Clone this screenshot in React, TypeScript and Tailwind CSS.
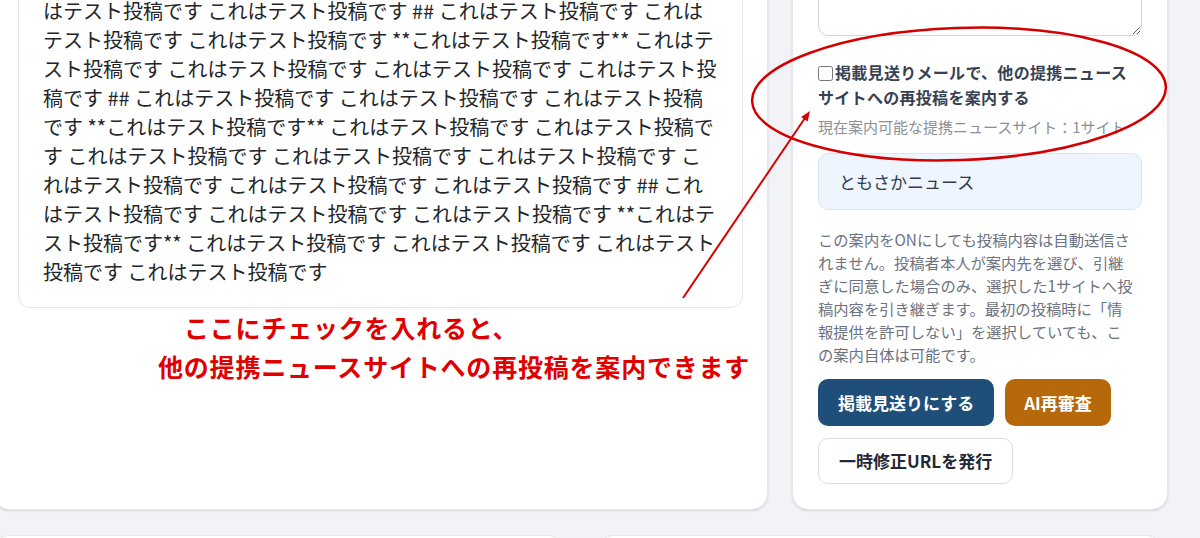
import React from 'react';

const POST_LINES = [
  'これはテスト投稿です これはテスト投稿です これはテスト投稿です これは',
  'テスト投稿です **これはテスト投稿です** これはテスト投稿です これ',
  'はテスト投稿です これはテスト投稿です これはテスト投稿です これ',
  'はテスト投稿です これはテスト投稿です ## これはテスト投稿です これは',
  'テスト投稿です これはテスト投稿です **これはテスト投稿です** これはテ',
  'スト投稿です これはテスト投稿です これはテスト投稿です これはテスト投',
  '稿です ## これはテスト投稿です これはテスト投稿です これはテスト投稿',
  'です **これはテスト投稿です** これはテスト投稿です これはテスト投稿で',
  'す これはテスト投稿です これはテスト投稿です これはテスト投稿です こ',
  'れはテスト投稿です これはテスト投稿です これはテスト投稿です ## これ',
  'はテスト投稿です これはテスト投稿です これはテスト投稿です **これはテ',
  'スト投稿です** これはテスト投稿です これはテスト投稿です これはテスト',
  '投稿です これはテスト投稿です',
];

const NOTE_LINES = [
  'この案内をONにしても投稿内容は自動送信さ',
  'れません。投稿者本人が案内先を選び、引継',
  'ぎに同意した場合のみ、選択した1サイトへ投',
  '稿内容を引き継ぎます。最初の投稿時に「情',
  '報提供を許可しない」を選択していても、こ',
  'の案内自体は可能です。',
];

function Annotation() {
  // 赤い手書き風の囲みと矢印
  return (
    <svg
      className="pointer-events-none absolute left-0 top-0"
      width="1200"
      height="538"
      viewBox="0 0 1200 538"
    >
      <ellipse
        cx="959"
        cy="94"
        rx="207"
        ry="66"
        transform="rotate(-2 959 94)"
        fill="none"
        stroke="#d40000"
        strokeWidth="2.5"
      />
      <line x1="683" y1="298" x2="805" y2="118" stroke="#d40000" strokeWidth="2" />
      <polygon points="810,111 807.7,121.5 801.1,117" fill="#d40000" />
    </svg>
  );
}

export default function App() {
  return (
    <div className="relative h-[538px] w-[1200px] overflow-hidden bg-[#f1f3f6] font-['Noto_Sans_CJK_JP','Noto_Sans',sans-serif]">
      <div className="ml-[-7px] mt-[-133px] pr-8">
        <div className="flex items-stretch gap-6">
          {/* 左：投稿本文 */}
          <div className="min-w-0 flex-1 rounded-2xl border border-[#e6e8ec] bg-white px-6 pb-6 pt-6 shadow-sm">
            <div className="rounded-xl border border-[#e5e7eb] bg-white px-6 pb-[21px] pt-4">
              {POST_LINES.map((line, i) => (
                <div key={i} className="whitespace-nowrap text-[20px] leading-[29px] text-[#222629]">
                  {line}
                </div>
              ))}
            </div>
            <div className="whitespace-nowrap text-[25px] font-bold leading-[39px] tracking-[0.8px] text-[#e00000]">
              <div className="pl-[166px]">ここにチェックを入れると、</div>
              <div className="pl-[140px]">他の提携ニュースサイトへの再投稿を案内できます</div>
            </div>
          </div>

          {/* 右：操作パネル */}
          <div className="w-[376px] shrink-0 rounded-2xl border border-[#e6e8ec] bg-white px-[25px] pb-[25px] pt-6 shadow-sm">
            <textarea className="block h-[144px] w-full rounded-[10px] border border-[#d1d5db] bg-white" />

            <label className="mt-6 block text-[16px] font-bold leading-[25px] tracking-[0.3px] text-[#374151]">
              <input type="checkbox" className="mr-[2px] h-[15px] w-[15px] align-[-2px]" />
              掲載見送りメールで、他の提携ニュース
              <br />
              サイトへの再投稿を案内する
            </label>
            <p className="mt-[7px] whitespace-nowrap text-[15px] leading-[20px] text-[#8b9098]">
              現在案内可能な提携ニュースサイト：1サイト
            </p>

            <div className="mt-4 flex h-[57px] items-center rounded-[10px] border border-[#dbe5f1] bg-[#eef5fe] px-5 text-[17px] text-[#2f3b4c]">
              ともさかニュース
            </div>

            <div className="mt-[18px] text-[15.3px] leading-[23px] text-[#6b7280]">
              {NOTE_LINES.map((line, i) => (
                <div key={i} className="whitespace-nowrap">
                  {line}
                </div>
              ))}
            </div>

            <div className="mt-[13px] flex flex-wrap gap-x-[11px] gap-y-3">
              <button className="h-[47px] rounded-[10px] bg-[#1f4e79] px-5 text-[17px] font-bold text-white">
                掲載見送りにする
              </button>
              <button className="h-[47px] rounded-[10px] bg-[#b5690b] px-[19px] text-[17px] font-bold text-white">
                AI再審査
              </button>
              <button className="h-[46px] rounded-[10px] border border-[#d9dce1] bg-white px-5 text-[17px] font-bold text-[#1f2937]">
                一時修正URLを発行
              </button>
            </div>
          </div>
        </div>

        {/* 下段カード（上端のみ表示） */}
        <div className="mt-[25px] flex gap-[33px]">
          <div className="h-[40px] w-[571px] rounded-2xl border border-[#e6e8ec] bg-white" />
          <div className="h-[40px] w-[566px] rounded-2xl border border-[#e6e8ec] bg-white" />
        </div>
      </div>

      <Annotation />
    </div>
  );
}
